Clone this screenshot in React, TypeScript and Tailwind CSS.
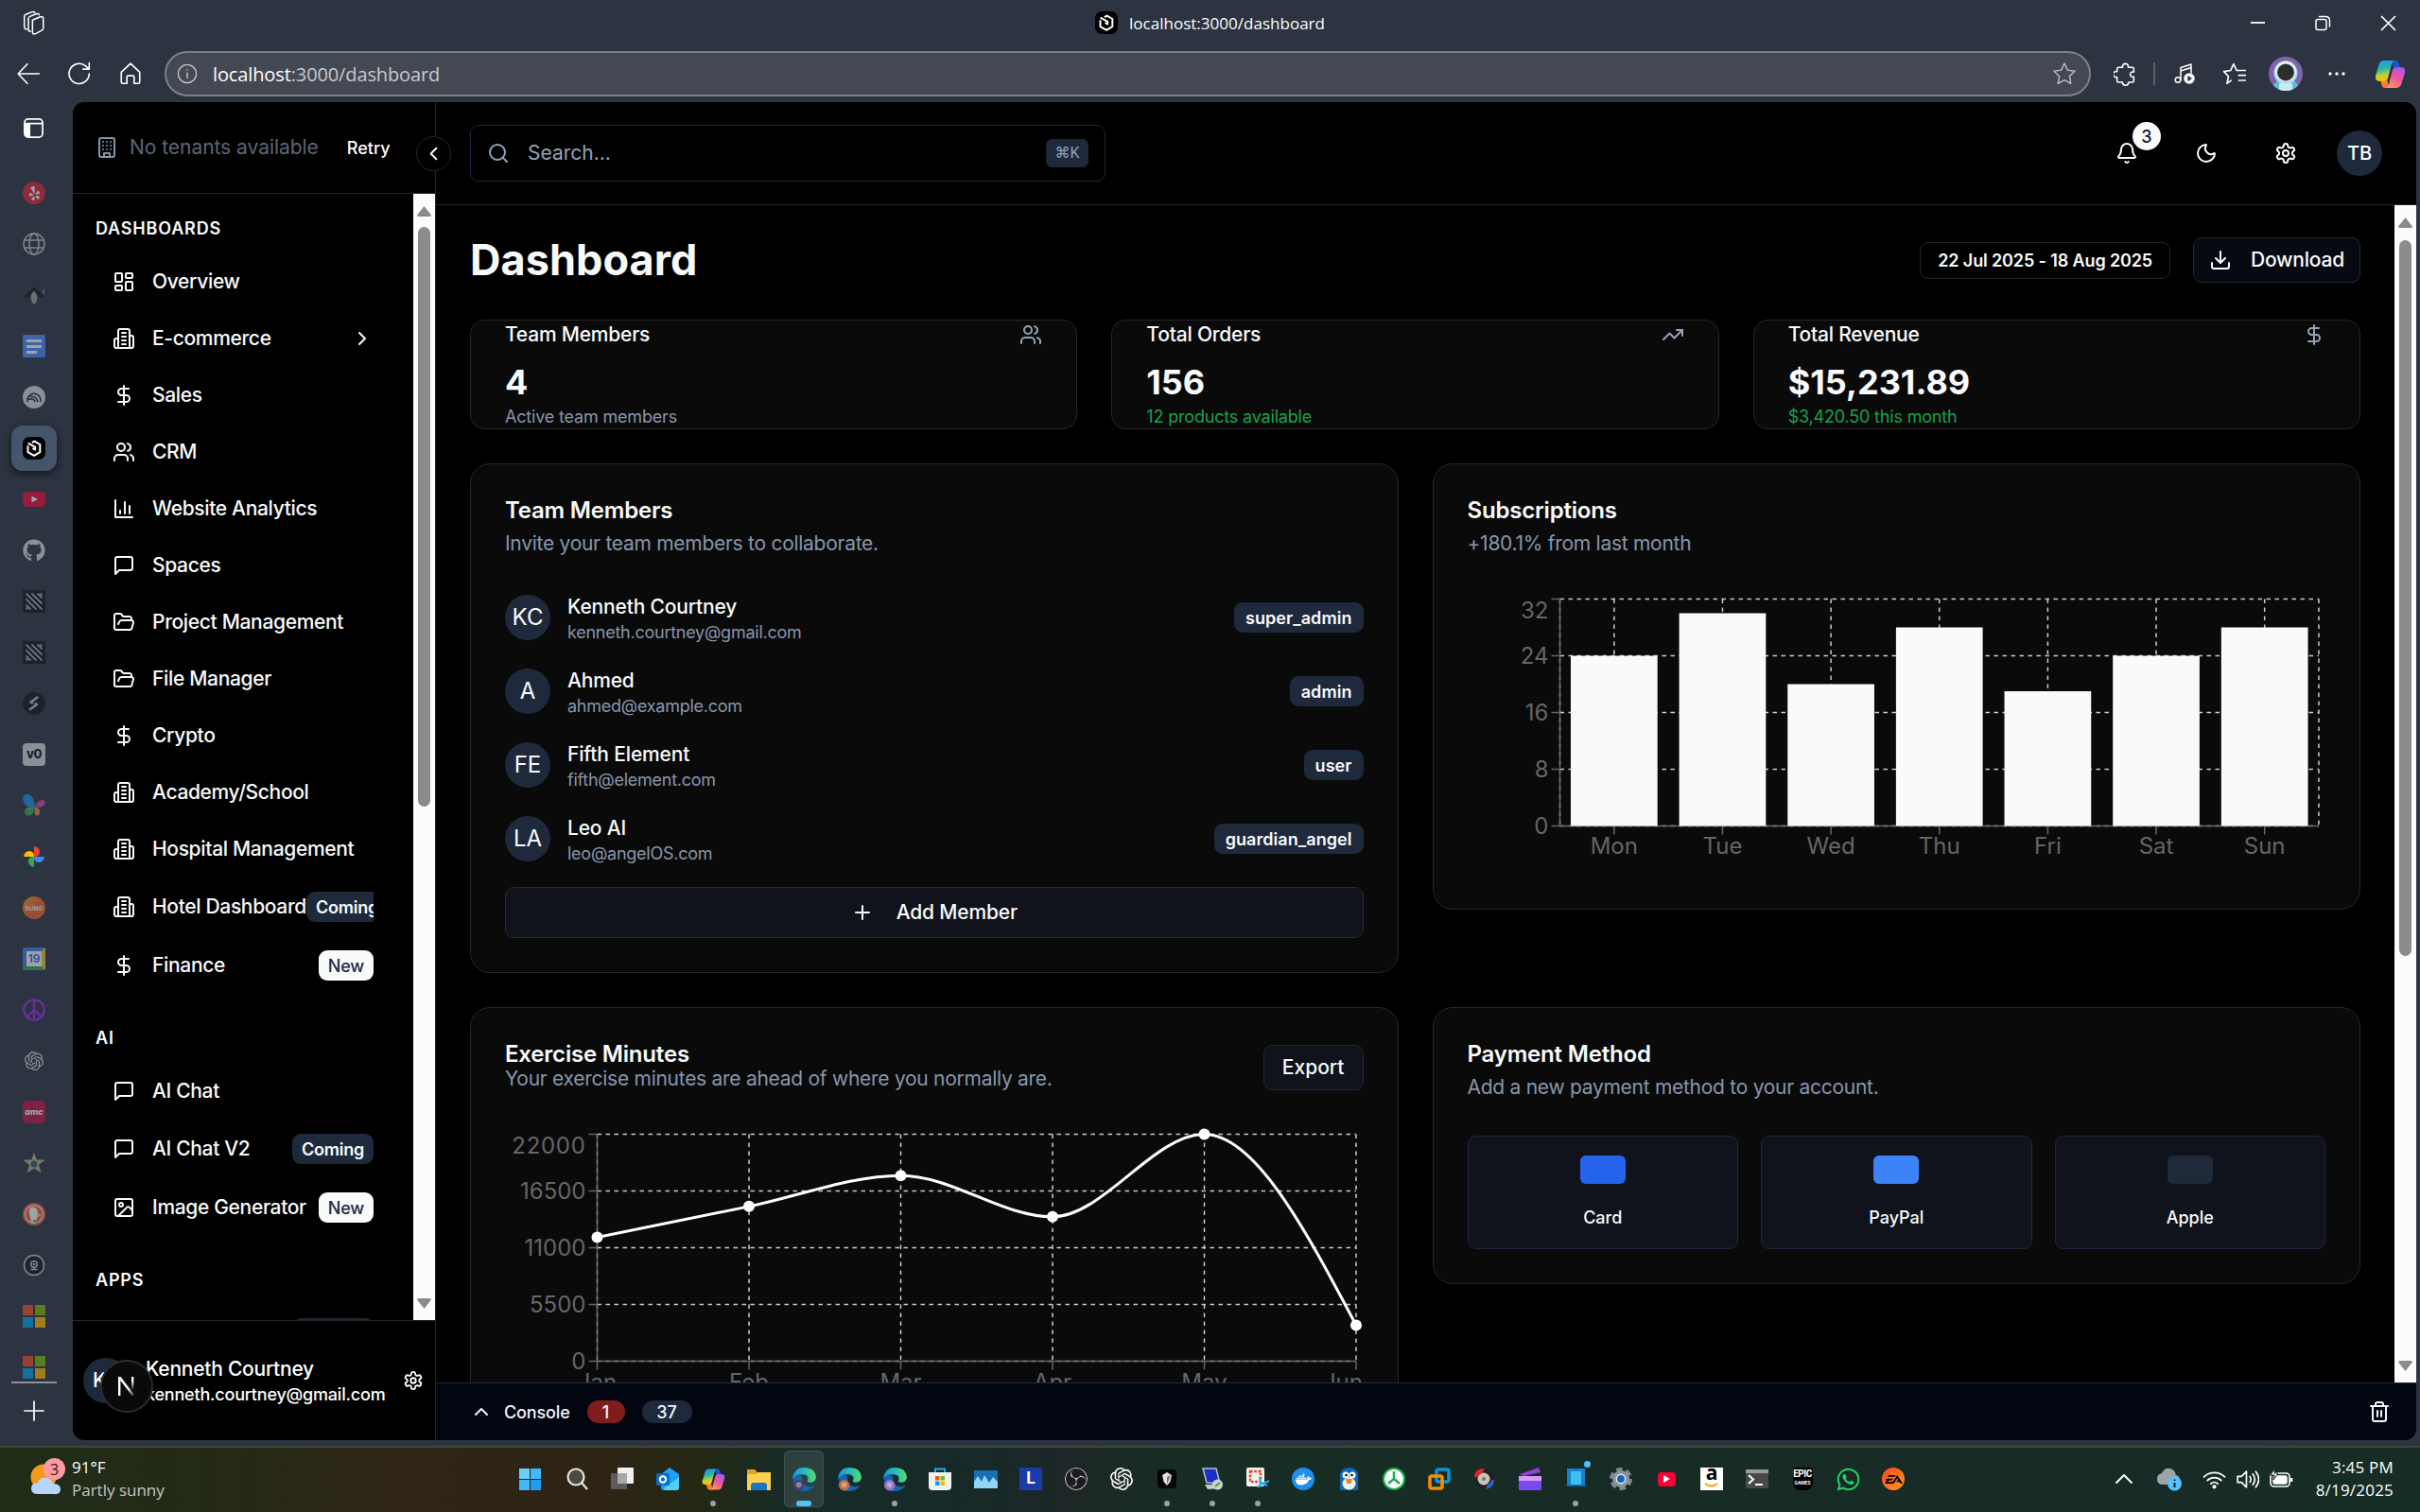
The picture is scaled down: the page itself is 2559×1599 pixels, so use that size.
import React from "react";
import {
  Bell,
  ChevronLeft,
  ChevronRight,
  ChevronUp,
  DollarSign,
  Download,
  FolderOpen,
  Image as ImageIcon,
  Moon,
  Plus,
  Search,
  Trash2,
  TrendingUp,
  Users,
} from "lucide-react";
import { FaAmazon, FaGithub, FaWhatsapp, FaYelp, FaDocker } from "react-icons/fa";
import { SiOpenai, SiObsstudio, SiEa, SiDuckduckgo } from "react-icons/si";

type IconProps = { size?: number; className?: string };

function Stroke({ size = 24, className = "", width = 2, children }: IconProps & { width?: number; children: React.ReactNode }) {
  return (
    <svg width={size} height={size} viewBox="0 0 24 24" fill="none" stroke="currentColor" strokeWidth={width} strokeLinecap="round" strokeLinejoin="round" className={`shrink-0 ${className}`}>
      {children}
    </svg>
  );
}

/* ---------- app icons ---------- */

const BuildingTwo = (p: IconProps) => (
  <Stroke {...p}>
    <path d="M6 22V4a2 2 0 0 1 2-2h8a2 2 0 0 1 2 2v18Z" />
    <path d="M6 12H4a2 2 0 0 0-2 2v6a2 2 0 0 0 2 2h2" />
    <path d="M18 9h2a2 2 0 0 1 2 2v9a2 2 0 0 1-2 2h-2" />
    <path d="M10 6h4M10 10h4M10 14h4M10 18h4" />
  </Stroke>
);
const Building = (p: IconProps) => (
  <Stroke {...p}>
    <rect width="16" height="20" x="4" y="2" rx="2" />
    <path d="M9 22v-4h6v4M8 6h.01M16 6h.01M12 6h.01M12 10h.01M12 14h.01M16 10h.01M16 14h.01M8 10h.01M8 14h.01" />
  </Stroke>
);
const Dashboard = (p: IconProps) => (
  <Stroke {...p}>
    <rect width="7" height="9" x="3" y="3" rx="1" />
    <rect width="7" height="5" x="14" y="3" rx="1" />
    <rect width="7" height="9" x="14" y="12" rx="1" />
    <rect width="7" height="5" x="3" y="16" rx="1" />
  </Stroke>
);
const Bars = (p: IconProps) => (
  <Stroke {...p}>
    <path d="M3 3v18h18M18 17V9M13 17V5M8 17v-3" />
  </Stroke>
);
const Message = (p: IconProps) => (
  <Stroke {...p}>
    <path d="M21 15a2 2 0 0 1-2 2H7l-4 4V5a2 2 0 0 1 2-2h14a2 2 0 0 1 2 2z" />
  </Stroke>
);
const Gear = (p: IconProps) => (
  <Stroke {...p}>
    <path d="M12.22 2h-.44a2 2 0 0 0-2 2v.18a2 2 0 0 1-1 1.73l-.43.25a2 2 0 0 1-2 0l-.15-.08a2 2 0 0 0-2.73.73l-.22.38a2 2 0 0 0 .73 2.73l.15.1a2 2 0 0 1 1 1.72v.51a2 2 0 0 1-1 1.74l-.15.09a2 2 0 0 0-.73 2.73l.22.38a2 2 0 0 0 2.73.73l.15-.08a2 2 0 0 1 2 0l.43.25a2 2 0 0 1 1 1.73V20a2 2 0 0 0 2 2h.44a2 2 0 0 0 2-2v-.18a2 2 0 0 1 1-1.73l.43-.25a2 2 0 0 1 2 0l.15.08a2 2 0 0 0 2.73-.73l.22-.39a2 2 0 0 0-.73-2.73l-.15-.08a2 2 0 0 1-1-1.74v-.5a2 2 0 0 1 1-1.74l.15-.09a2 2 0 0 0 .73-2.73l-.22-.38a2 2 0 0 0-2.73-.73l-.15.08a2 2 0 0 1-2 0l-.43-.25a2 2 0 0 1-1-1.73V4a2 2 0 0 0-2-2z" />
    <circle cx="12" cy="12" r="3" />
  </Stroke>
);

/* ---------- browser chrome ---------- */

function AppLogo() {
  return (
    <svg width="24" height="24" viewBox="0 0 24 24" className="shrink-0">
      <rect width="24" height="24" rx="7" fill="#000" />
      <path d="M5.500 9.200V16.200L12 19.800l6.300-3.600V8L12.500 4.600 9.800 6.200M5.600 6.600 13.200 10.900v2.700L10.500 12" fill="none" stroke="#fff" strokeWidth="2" strokeLinejoin="round" />
    </svg>
  );
}

function TitleBar() {
  return (
    <div className="flex h-[48px] items-center text-white">
      <div className="flex w-[72px] justify-center">
        <Stroke size={26} width={1.4}>
          <path d="M10.500 9.500 17.500 6.500Q21 5.300 21 8v9.500q0 1.500-1.500 2L14 22.500q-3.500 1.500-3.500-1.500z" />
          <path d="M8.500 20.500Q6.500 20.500 6.500 18.500V8q0-1.500 1.500-2.100L14 3.500q2.500-.8 3 .8" />
          <path d="M5 18.500Q2.500 18.500 2.500 16V6q0-1.500 1.500-2.100L10 1.500q2-.6 2.800.6" />
        </Stroke>
      </div>
      <div className="flex flex-1 items-center justify-center gap-[12px] pl-[108px]">
        <AppLogo />
        <span className="pt-[2px] font-['Open_Sans'] text-[17px] tracking-[0.001em]">localhost:3000/dashboard</span>
      </div>
      <div className="flex items-center gap-[52px] pr-[25px]">
        <svg width="17" height="17" viewBox="0 0 17 17" stroke="#fff" strokeWidth="1.800"><path d="M1 8h15" /></svg>
        <svg width="17" height="17" viewBox="0 0 17 17" fill="none" stroke="#fff" strokeWidth="1.500"><rect x="1" y="4.500" width="11" height="11" rx="2" /><path d="M4.500 1.500H11q4.500 0 4.500 4.500v6" strokeLinecap="round" /></svg>
        <svg width="17" height="17" viewBox="0 0 17 17" stroke="#fff" strokeWidth="1.700"><path d="M1 1l15 15M16 1 1 16" /></svg>
      </div>
    </div>
  );
}

function CopilotMark({ size }: { size: number }) {
  return (
    <svg width={size} height={size} viewBox="0 0 32 32" className="shrink-0">
      <defs>
        <linearGradient id="cpA" x1="0" y1="0" x2="0.200" y2="1">
          <stop offset="0" stopColor="#1a9be8" />
          <stop offset=".45" stopColor="#2bb3b0" />
          <stop offset=".75" stopColor="#b5d334" />
          <stop offset="1" stopColor="#ffc400" />
        </linearGradient>
        <linearGradient id="cpB" x1="0.800" y1="0" x2="0.200" y2="1">
          <stop offset="0" stopColor="#a855f7" />
          <stop offset=".5" stopColor="#f0569a" />
          <stop offset="1" stopColor="#ff9a4d" />
        </linearGradient>
      </defs>
      <path d="M17 2h5q2 0 2.800 2.500L26.500 10H20z" fill="#1b55d9" />
      <path d="M15 30h-5q-2 0-2.600-2.500L6 22h7z" fill="#ff7a33" />
      <path d="M9.500 2H20q-2 1-2.700 4L14 19q-1 4-4 4H4.500Q0 23 1 17.500L4.500 6Q5.600 2 9.500 2z" fill="url(#cpA)" />
      <path d="M22.500 30H12q2-1 2.700-4L18 13q1-4 4-4h5.500Q32 9 31 14.500L27.500 26q-1.100 4-5 4z" fill="url(#cpB)" />
    </svg>
  );
}

function Toolbar() {
  return (
    <div className="flex h-[60px] items-center text-white">
      <div className="flex w-[174px] items-center gap-[28px] pl-[17px]">
        <Stroke size={26} width={1.500}><path d="M22.500 12H2M11 2.500 2 12l9 9.500" /></Stroke>
        <Stroke size={26} width={1.500}><path d="M21.500 12A9.800 9.800 0 1 1 17.500 4L21 7M21.500 1.500V7.500H15.500" /></Stroke>
        <Stroke size={26} width={1.500}><path d="M3 10.500 12 2l9 8.500V20q0 1.500-1.500 1.500H15.500V15q0-1-1-1h-5q-1 0-1 1v6.500H4.500Q3 21.500 3 20z" /></Stroke>
      </div>
      <div className="flex h-[48px] w-[2037px] items-center rounded-full border-2 border-[#7c8189] bg-[#434852] pr-[13px] pl-[11px]">
        <Stroke size={22} width={1.500} className="text-[#c9ccd1]">
          <circle cx="12" cy="12" r="10.500" /><path d="M12 11v6M12 7.200v.4" />
        </Stroke>
        <span className="ml-[16px] pt-[1px] font-['Open_Sans'] text-[20px] tracking-[-0.006em] text-[#c7cacf]">
          <span className="text-white">localhost</span>:3000/dashboard
        </span>
        <Stroke size={26} width={1.300} className="ml-auto text-[#b9bcc2]">
          <path d="M12 1.800 15.100 8.400l7.100 1-5.200 5 1.300 7.200L12 18.100l-6.300 3.500L7 14.400l-5.200-5 7.100-1z" />
        </Stroke>
      </div>
      <div className="flex flex-1 items-center pl-[24px]">
        <Stroke size={25} width={1.500}>
          <path d="M5 5h4.200a2.900 2.900 0 1 1 5.600 0H19q1.500 0 1.500 1.500V9.800a2.600 2.600 0 1 0 0 4.800v4q0 1.500-1.500 1.500h-3.800a3 3 0 1 1-6.200 0H5q-1.500 0-1.500-1.500V14.800a2.900 2.900 0 1 1 0-5.400V6.500Q3.500 5 5 5z" />
        </Stroke>
        <div className="ml-[17px] h-[24px] w-[2px] bg-[#596069]" />
        <Stroke size={24} width={1.500} className="ml-[19px]">
          <path d="M8 18V5.500L19 2v9M8 9l11-3.500" />
          <circle cx="5" cy="18.500" r="2.800" />
          <circle cx="17" cy="17" r="5" fill="#fff" /><path d="M16 15v4l3-2z" fill="#2b3440" stroke="#2b3440" />
        </Stroke>
        <Stroke size={26} width={1.500} className="ml-[28px]">
          <path d="M8.500 18.500 4.500 21.500 6 14.500 1.500 9.800l6.500-1L11 2.500l3 6.300h8.500M16 13.500h6.500M16 18.500h6.500" />
        </Stroke>
        <svg width="36" height="36" viewBox="0 0 36 36" className="ml-[23px] shrink-0">
          <defs><clipPath id="avatarClip"><circle cx="18" cy="18" r="18" /></clipPath></defs>
          <g clipPath="url(#avatarClip)">
            <rect width="36" height="36" fill="#8163ad" />
            <path d="M4 36q0-12 14-12t14 12z" fill="#62bfd2" />
            <circle cx="18" cy="17" r="12.500" fill="#a5dfe9" />
            <circle cx="18" cy="15.500" r="11" fill="#e2f3f6" />
            <circle cx="18" cy="16.500" r="9" fill="#2f2d2b" />
            <rect x="11" y="28" width="14" height="8" rx="2" fill="#c9ebf2" />
          </g>
        </svg>
        <svg width="20" height="6" viewBox="0 0 20 6" fill="#fff" className="ml-[26px] shrink-0"><circle cx="3" cy="3" r="1.700" /><circle cx="10" cy="3" r="1.700" /><circle cx="17" cy="3" r="1.700" /></svg>
        <div className="ml-[30px]"><CopilotMark size={33} /></div>
      </div>
    </div>
  );
}

/* ---------- vertical tab strip ---------- */

const Hatch = () => (
  <svg width="24" height="24" viewBox="0 0 24 24">
    <rect width="24" height="24" fill="#12161c" />
    <path d="M4 4l16 16M4 10l10 10M4 16l4 4M10 4l10 10M16 4l4 4M4 19l1 1M19 4l1 1" stroke="#b8bec6" strokeWidth="1.700" strokeLinecap="round" />
  </svg>
);

const Squares = () => (
  <svg width="24" height="24" viewBox="0 0 24 24">
    <rect width="11" height="11" fill="#f25022" /><rect x="13" width="11" height="11" fill="#7fba00" />
    <rect y="13" width="11" height="11" fill="#00a4ef" /><rect x="13" y="13" width="11" height="11" fill="#ffb900" />
  </svg>
);

const tabIcons: React.ReactNode[] = [
  <div className="flex size-[24px] items-center justify-center rounded-full bg-[#e0243a] text-white"><FaYelp size={15} /></div>,
  <Stroke size={24} width={1.500} className="text-[#c5cad1]"><circle cx="12" cy="12" r="11" /><ellipse cx="12" cy="12" rx="5" ry="11" /><path d="M2 8h20M2 16h20" /></Stroke>,
  <svg width="24" height="24" viewBox="0 0 24 24"><path d="M1 14 12 3l11 11-4 1-7-8-7 8z" fill="#14181e" /><path d="M12 8q5 4 2.500 11L12 22l-2.500-3Q7 12 12 8z" fill="#9aa0a8" /><path d="M22 6v5" stroke="#3b82c4" strokeWidth="2" /></svg>,
  <div className="flex size-[24px] flex-col justify-center gap-[3px] rounded-[2px] bg-[#4f8bff] pl-[4px]"><div className="h-[3px] w-[16px] bg-white" /><div className="h-[3px] w-[16px] bg-white" /><div className="h-[3px] w-[11px] bg-white" /></div>,
  <svg width="24" height="24" viewBox="0 0 24 24"><circle cx="12" cy="12" r="12" fill="#d8dce1" /><path d="M5 17v-3a7 7 0 0 1 14 3M7.500 11.500Q14 10 16 17M5.500 14.500q6-2 7.500 2.500" fill="none" stroke="#222a34" strokeWidth="1.500" /></svg>,
  null,
  <svg width="24" height="24" viewBox="0 0 24 24"><rect y="4" width="24" height="16" rx="4" fill="#f0083c" /><path d="M9.500 8.500v7l6.500-3.500z" fill="#fff" /></svg>,
  <FaGithub size={24} color="#d8dce1" />,
  <Hatch />,
  <Hatch />,
  <svg width="24" height="24" viewBox="0 0 24 24"><circle cx="12" cy="12" r="12" fill="#12161c" /><path d="M8.500 10.500 15.500 5.500M8 18 15 13M8.500 10.500l1.500.7M15 13l-1.500-.7" stroke="#b8bec6" strokeWidth="2.500" strokeLinecap="round" /></svg>,
  <div className="flex size-[24px] items-center justify-center rounded-[4px] bg-[#d8dce1] font-['Inter'] text-[13px] font-extrabold tracking-[-0.030em] text-[#10151c]">v0</div>,
  <svg width="24" height="24" viewBox="0 0 24 24"><path d="M13 13Q12 0 4 0-1 1 .5 7q2 8 12.500 6z" fill="#1793e8" /><path d="M13 13q-10-1-11 5 0 5 5 4.500Q12 22 13 13z" fill="#3fa85c" /><path d="M13 14q1-8 9-8 4 2 0 6-3 3-9 2z" fill="#d8409a" /><path d="M13 14q6 0 5 6-2 5-5 1-1-3 0-7z" fill="#e08a3c" /></svg>,
  <svg width="24" height="24" viewBox="0 0 24 24"><path d="M12 1q6 1 6 6t-6 5z" fill="#ea4335" /><path d="M1 12q1-6 6-6t5 6z" fill="#fbbc04" /><path d="M12 12v11q-6-1-6-6t6-5z" fill="#34a853" /><path d="M12 12h11q-1 6-6 6t-5-6z" fill="#4285f4" /></svg>,
  <div className="flex size-[24px] items-center justify-center rounded-full bg-gradient-to-br from-[#f0a020] via-[#f2662c] to-[#e8683a] font-['Inter'] text-[6px] font-bold tracking-[0.060em] text-white">SUNO</div>,
  <div className="flex size-[24px] items-center justify-center border-4 border-t-[#3f7df0] border-r-[#f7c32e] border-b-[#34a853] border-l-[#3f7df0] bg-white font-['Inter'] text-[12px] font-semibold text-[#3268d6]">19</div>,
  <Stroke size={24} width={2.300} className="text-[#9a2be8]"><circle cx="12" cy="12" r="10.700" /><path d="M12 1.500v21M12 12l-7.500 7M12 12l7.500 7" /></Stroke>,
  <SiOpenai size={20} color="#d8dce1" />,
  <div className="flex size-[24px] items-center justify-center rounded-[4px] bg-[#c01448] font-['Inter'] text-[9px] font-extrabold text-white italic">amc</div>,
  <svg width="24" height="24" viewBox="0 0 24 24"><path d="M12 1l2.700 7.500H24l-7 5.300 2.500 8.700L12 17.500l-7.500 5L7 13.800 0 8.500h9.300z" fill="#b8af8a" /><circle cx="12" cy="13" r="3.500" fill="#2d5b66" /></svg>,
  <svg width="24" height="24" viewBox="0 0 24 24"><circle cx="12" cy="12" r="12" fill="#f0603f" /><circle cx="12" cy="12" r="10" fill="#fff" /><circle cx="12" cy="12" r="9" fill="#f0603f" /><path d="M8 5q6-2 8 4l-.5 2 4 2q-1 2-4 1.500l-1 6.500q-4 1-5.500-.5-1-6-2-9T8 5z" fill="#fff" /><path d="m14.500 12 5 1.200-4.500 1.600z" fill="#f7c52e" /><path d="M11 18h5v2.500h-5z" fill="#4caf50" /></svg>,
  <Stroke size={24} width={1.500} className="text-[#c5cad1]"><circle cx="12" cy="12" r="10.500" fill="#151a20" /><circle cx="12" cy="11" r="3.200" /><circle cx="12" cy="11" r=".6" /><path d="M9 16.500h6M12 14.500v2" /></Stroke>,
  <Squares />,
  <Squares />,
];

function TabStrip() {
  return (
    <div className="flex w-[77px] shrink-0 flex-col overflow-hidden">
      <div className="flex h-[54px] w-[71px] items-center justify-center text-white">
        <Stroke size={23} width={1.800}><rect x="2" y="2" width="20" height="20" rx="4" /><path d="M2 7h20" /><path d="M3 7.500h4.500V21H5q-2 0-2-2z" fill="#fff" /></Stroke>
      </div>
      <div className="mt-[15px] h-[1284px] w-[72px] overflow-hidden">
        {tabIcons.map((icon, i) =>
          i === 5 ? (
            <div key={i} className="flex h-[54px] items-center justify-center">
              <div className="flex size-[48px] items-center justify-center rounded-[12px] bg-[#45566b] shadow-[0_3px_8px_rgba(0,0,0,0.6)]"><AppLogo /></div>
            </div>
          ) : (
            <div key={i} className={i === 13 ? "flex h-[54px] items-center justify-center" : "flex h-[54px] items-center justify-center opacity-55"}>{icon}</div>
          ),
        )}
      </div>
      <div className="ml-[12px] h-[2px] w-[48px] bg-[#8b9199]" />
      <div className="flex h-[58px] w-[71px] items-center justify-center text-white">
        <Stroke size={24} width={1.700}><path d="M12 2v20M2 12h20" /></Stroke>
      </div>
    </div>
  );
}

/* ---------- shared pieces ---------- */

function Scrollbar({ thumb }: { thumb: string }) {
  return (
    <div className="flex h-full w-[23px] shrink-0 flex-col items-center bg-[#fcfcfc]">
      <svg width="15" height="11" viewBox="0 0 15 11" className="mt-[13px] shrink-0"><path d="M7.500 0 15 9.500Q15 11 13 11H2Q0 11 0 9.500z" fill="#8b8b8b" /></svg>
      <div className={`w-[13px] rounded-full bg-[#8b8b8b] ${thumb}`} />
      <svg width="15" height="11" viewBox="0 0 15 11" className="mt-auto mb-[12px] shrink-0"><path d="M7.500 11 15 1.500Q15 0 13 0H2Q0 0 0 1.500z" fill="#8b8b8b" /></svg>
    </div>
  );
}

/* ---------- sidebar ---------- */

type Item = { label: string; icon: (p: IconProps) => React.ReactNode; badge?: "New" | "Coming"; arrow?: boolean };

const L = (C: React.ComponentType<{ size?: number; className?: string }>) => (p: IconProps) => <C {...p} />;

const groups: { label: string; items: Item[] }[] = [
  {
    label: "DASHBOARDS",
    items: [
      { label: "Overview", icon: Dashboard },
      { label: "E-commerce", icon: BuildingTwo, arrow: true },
      { label: "Sales", icon: L(DollarSign) },
      { label: "CRM", icon: L(Users) },
      { label: "Website Analytics", icon: Bars },
      { label: "Spaces", icon: Message },
      { label: "Project Management", icon: L(FolderOpen) },
      { label: "File Manager", icon: L(FolderOpen) },
      { label: "Crypto", icon: L(DollarSign) },
      { label: "Academy/School", icon: BuildingTwo },
      { label: "Hospital Management", icon: BuildingTwo },
      { label: "Hotel Dashboard", icon: BuildingTwo, badge: "Coming" },
      { label: "Finance", icon: L(DollarSign), badge: "New" },
    ],
  },
  {
    label: "AI",
    items: [
      { label: "AI Chat", icon: Message },
      { label: "AI Chat V2", icon: Message, badge: "Coming" },
      { label: "Image Generator", icon: L(ImageIcon), badge: "New" },
    ],
  },
];

function NavItem({ item }: { item: Item }) {
  const Icon = item.icon;
  return (
    <div className={`flex items-center overflow-hidden ${item.badge ? "h-[56px]" : "h-[54px]"}`}>
      <Icon size={24} className="shrink-0" />
      <span className="ml-[18px] shrink-0 text-[21px] font-[450] tracking-[-0.016em] whitespace-nowrap">{item.label}</span>
      {item.arrow && <ChevronRight size={24} className="ml-auto" />}
      {item.badge && (
        <span className={`ml-auto flex h-[32px] shrink-0 items-center rounded-[9px] px-[10px] text-[18px] tracking-[-0.012em] ${item.badge === "New" ? "bg-[#f8fafc] font-medium text-[#1e293b]" : "bg-[#1e293b] font-semibold text-[#f8fafc]"}`}>
          {item.badge}
        </span>
      )}
    </div>
  );
}

function GroupLabel({ children }: { children: React.ReactNode }) {
  return <div className="flex h-[48px] items-center text-[18px] font-semibold tracking-[0.045em]">{children}</div>;
}

function Sidebar() {
  return (
    <div className="relative flex w-[384px] shrink-0 flex-col border-r border-[#262626]">
      <div className="flex h-[97px] items-center border-b border-[#262626] pl-[24px]">
        <Building size={24} className="text-[#8592a8]" />
        <span className="ml-[12px] text-[21px] tracking-[-0.002em] text-[#5d6577]">No tenants available</span>
        <span className="ml-[30px] text-[18px] font-medium text-white">Retry</span>
      </div>
      <div className="flex h-[1191px]">
        <div className="w-[360px] overflow-hidden pt-[12px] pr-[42px] pl-[24px] text-[#f8fafc]">
          {groups.map((g) => (
            <div key={g.label} className="mb-[24px] flex flex-col gap-[6px]">
              <GroupLabel>{g.label}</GroupLabel>
              <div className="flex flex-col gap-[6px] pl-[18px]">
                {g.items.map((it) => <NavItem key={it.label} item={it} />)}
              </div>
            </div>
          ))}
          <GroupLabel>APPS</GroupLabel>
          <div className="mt-[17px] ml-auto h-[32px] w-[85px] rounded-[9px] bg-[#1e293b]" />
        </div>
        <Scrollbar thumb="h-[613px] mt-[11px]" />
      </div>
      <div className="flex flex-1 items-center rounded-bl-[12px] border-t border-[#262626] pl-[11px] text-white">
        <div className="relative flex size-[48px] items-center rounded-full bg-[#1e293b] pl-[10px] text-[21px] font-medium">
          KC
          <div className="absolute top-[2px] left-[18px] flex size-[56px] items-center justify-center rounded-full border-2 border-[#2d2d2d] bg-[#0a0a0a]">
            <svg width="20" height="22" viewBox="0 0 20 22" fill="none">
              <defs>
                <linearGradient id="nLeg" x1="0" y1="0" x2="0" y2="1"><stop offset=".3" stopColor="#fff" /><stop offset="1" stopColor="#fff" stopOpacity="0" /></linearGradient>
                <linearGradient id="nDiag" x1="0" y1="0" x2="1" y2="1"><stop offset=".6" stopColor="#fff" /><stop offset="1" stopColor="#fff" stopOpacity=".1" /></linearGradient>
              </defs>
              <path d="M1 21V1h2.600L18 20l-2 1.500L3.400 5v16z" fill="url(#nDiag)" />
              <path d="M15 1h2.400v14H15z" fill="url(#nLeg)" />
            </svg>
          </div>
        </div>
        <div className="ml-[18px] flex flex-col pt-[1px] whitespace-nowrap">
          <span className="text-[21px] leading-[27px] font-medium tracking-[-0.012em]">Kenneth Courtney</span>
          <span className="text-[18px] leading-[27px] font-medium tracking-[-0.011em]">kenneth.courtney@gmail.com</span>
        </div>
        <Gear size={22} className="mr-[12px] ml-auto" />
      </div>
      <div className="absolute top-[36px] left-[363px] z-10 flex size-[37px] items-center justify-center rounded-full border border-[#262626] bg-black text-white">
        <ChevronLeft size={23} />
      </div>
    </div>
  );
}

/* ---------- main header ---------- */

function Header() {
  return (
    <div className="flex h-[109px] shrink-0 items-center border-b border-[#262626] px-[36px] text-white">
      <div className="flex h-[60px] w-[672px] items-center rounded-[9px] border border-[#1e293b] px-[17px]">
        <Search size={24} className="text-[#94a3b8]" />
        <span className="ml-[19px] text-[21px] text-[#94a3b8]">Search...</span>
        <span className="ml-auto flex h-[30px] w-[45px] items-center justify-center rounded-[6px] border border-[#262626] bg-[#1e293b] font-['DejaVu_Sans','Inter'] text-[16px] text-[#94a3b8]">
          ⌘<span className="font-['Roboto']">K</span>
        </span>
      </div>
      <div className="ml-auto flex items-center">
        <div className="relative">
          <Bell size={24} />
          <span className="absolute -top-[21px] left-[18px] flex size-[30px] items-center justify-center rounded-full bg-[#f8fafc] text-[18px] font-medium text-[#0f172a]">3</span>
        </div>
        <Moon size={24} className="ml-[60px]" />
        <Gear size={24} className="ml-[60px]" />
        <div className="ml-[42px] flex size-[48px] items-center justify-center rounded-full bg-[#1e293b] text-[20px] font-medium">TB</div>
      </div>
    </div>
  );
}

/* ---------- cards ---------- */

const stats = [
  { title: "Team Members", value: "4", note: "Active team members", noteClass: "text-[#8896ad]", Icon: Users },
  { title: "Total Orders", value: "156", note: "12 products available", noteClass: "text-[#16a34a]", Icon: TrendingUp },
  { title: "Total Revenue", value: "$15,231.89", note: "$3,420.50 this month", noteClass: "text-[#16a34a]", Icon: DollarSign },
];

function Card({ className = "", children }: { className?: string; children: React.ReactNode }) {
  return <div className={`rounded-[21px] border border-[#262626] bg-[#0a0a0a] p-[36px] ${className}`}>{children}</div>;
}

function CardTitle({ children }: { children: React.ReactNode }) {
  return <div className="pt-px text-[24px] leading-[24px] font-semibold tracking-[-0.008em] -mb-px">{children}</div>;
}

function CardNote({ className = "", children }: { className?: string; children: React.ReactNode }) {
  return <div className={`text-[21px] leading-[30px] tracking-[-0.013em] text-[#8896ad] ${className}`}>{children}</div>;
}

const members = [
  { initials: "KC", name: "Kenneth Courtney", email: "kenneth.courtney@gmail.com", role: "super_admin" },
  { initials: "A", name: "Ahmed", email: "ahmed@example.com", role: "admin" },
  { initials: "FE", name: "Fifth Element", email: "fifth@element.com", role: "user" },
  { initials: "LA", name: "Leo AI", email: "leo@angelOS.com", role: "guardian_angel" },
];

function TeamCard() {
  return (
    <Card className="h-[539px]">
      <CardTitle>Team Members</CardTitle>
      <CardNote className="mt-[9px]">Invite your team members to collaborate.</CardNote>
      <div className="mt-[36px] flex flex-col gap-[24px]">
        {members.map((m) => (
          <div key={m.name} className="flex h-[54px] items-center">
            <div className="flex size-[48px] items-center justify-center rounded-full bg-[#1e293b] text-[24px]">{m.initials}</div>
            <div className="ml-[18px] flex flex-col pt-px">
              <span className="text-[21px] leading-[30px] font-medium tracking-[-0.008em]">{m.name}</span>
              <span className="text-[18px] leading-[24px] tracking-[-0.014em] text-[#8896ad]">{m.email}</span>
            </div>
            <span className="ml-auto flex h-[32px] items-center rounded-[9px] bg-[#1e293b] px-[12px] text-[18px] font-semibold tracking-[0.003em]">{m.role}</span>
          </div>
        ))}
        <div className="flex h-[54px] items-center justify-center gap-[24px] rounded-[9px] border border-[#1e293b] bg-[#10131b] text-[21px] font-medium tracking-[-0.008em]">
          <Plus size={24} />
          Add Member
        </div>
      </div>
    </Card>
  );
}

const week = [["Mon", 24], ["Tue", 30], ["Wed", 20], ["Thu", 28], ["Fri", 19], ["Sat", 24], ["Sun", 28]] as const;

function SubscriptionsChart() {
  const x0 = 97.5, w = 802.5, y0 = 7.5, h = 240, step = w / 7;
  const bottom = y0 + h;
  return (
    <svg width="907" height="299" className="mt-[36px] block">
      <g stroke="#ccc" strokeWidth="1.500" strokeDasharray="4.500 4.500">
        {[0, 1, 2, 3, 4].map((i) => <path key={i} d={`M${x0} ${y0 + i * 60}h${w}`} />)}
        {week.map((d, i) => <path key={d[0]} d={`M${x0 + step * (i + 0.5)} ${y0}v${h}`} />)}
        <path d={`M${x0} ${y0}v${h}M${x0 + w} ${y0}v${h}`} />
      </g>
      <g stroke="#666" strokeWidth="1.500">
        <path d={`M${x0} ${y0}v${h}h${w}`} fill="none" />
        {[0, 1, 2, 3, 4].map((i) => <path key={i} d={`M${x0 - 9} ${y0 + i * 60}h9`} />)}
        {week.map((d, i) => <path key={d[0]} d={`M${x0 + step * (i + 0.5)} ${bottom}v9`} />)}
      </g>
      {week.map(([d, v], i) => (
        <rect key={d} x={x0 + step * (i + 0.1)} y={bottom - v * 7.5} width={step * 0.8} height={v * 7.5} fill="#f8fafc" />
      ))}
      <g fill="#666" fontSize="24">
        {[32, 24, 16, 8, 0].map((t, i) => <text key={t} x={x0 - 12} y={i === 0 ? y0 + 20 : y0 + i * 60 + 8.5} textAnchor="end">{t}</text>)}
        {week.map(([d], i) => <text key={d} x={x0 + step * (i + 0.5)} y={bottom + 29.5} textAnchor="middle">{d}</text>)}
      </g>
    </svg>
  );
}

const minutes = [["Jan", 12000], ["Feb", 15000], ["Mar", 18000], ["Apr", 14000], ["May", 22000], ["Jun", 3490]] as const;

/* Monotone cubic interpolation through evenly spaced points. */
function monotonePath(pts: [number, number][]) {
  const n = pts.length;
  const slope = pts.slice(1).map((p, i) => (p[1] - pts[i][1]) / (p[0] - pts[i][0]));
  const t: number[] = new Array(n).fill(0);
  for (let i = 1; i < n - 1; i++) {
    const a = slope[i - 1], b = slope[i];
    t[i] = (Math.sign(a) + Math.sign(b)) * Math.min(Math.abs(a), Math.abs(b), 0.25 * Math.abs(a + b));
  }
  t[0] = (3 * slope[0] - t[1]) / 2;
  t[n - 1] = (3 * slope[n - 2] - t[n - 2]) / 2;
  let d = `M${pts[0][0]} ${pts[0][1]}`;
  for (let i = 0; i < n - 1; i++) {
    const dx = (pts[i + 1][0] - pts[i][0]) / 3;
    d += `C${pts[i][0] + dx} ${pts[i][1] + dx * t[i]} ${pts[i + 1][0] - dx} ${pts[i + 1][1] - dx * t[i + 1]} ${pts[i + 1][0]} ${pts[i + 1][1]}`;
  }
  return d;
}

function ExerciseChart() {
  const x0 = 97.5, w = 802.5, y0 = 7.5, h = 240, step = w / 5;
  const bottom = y0 + h;
  const pts = minutes.map(([, v], i) => [x0 + i * step, bottom - (v / 22000) * h] as [number, number]);
  return (
    <svg width="907" height="300" className="mt-[36px] block overflow-visible">
      <g stroke="#ccc" strokeWidth="1.500" strokeDasharray="4.500 4.500">
        {[0, 1, 2, 3, 4].map((i) => <path key={i} d={`M${x0} ${y0 + i * 60}h${w}`} />)}
        {minutes.map((d, i) => <path key={d[0]} d={`M${x0 + step * i} ${y0}v${h}`} />)}
      </g>
      <g stroke="#666" strokeWidth="1.500">
        <path d={`M${x0} ${y0}v${h}h${w}`} fill="none" />
        {[0, 1, 2, 3, 4].map((i) => <path key={i} d={`M${x0 - 9} ${y0 + i * 60}h9`} />)}
        {minutes.map((d, i) => <path key={d[0]} d={`M${x0 + step * i} ${bottom}v9`} />)}
      </g>
      <path d={monotonePath(pts)} fill="none" stroke="#fff" strokeWidth="3" />
      {pts.map((p) => <circle key={p[0]} cx={p[0]} cy={p[1]} r="6" fill="#fff" />)}
      <g fill="#666" fontSize="24">
        {[22000, 16500, 11000, 5500, 0].map((t, i) => <text key={t} x={x0 - 12} y={i === 0 ? y0 + 20 : y0 + i * 60 + 8.5} textAnchor="end" letterSpacing={i === 0 ? 0.7 : 0}>{t}</text>)}
        {minutes.map(([d], i) => (
          <text key={d} x={i === 5 ? 907 : x0 + step * i} y={bottom + 30} textAnchor={i === 5 ? "end" : "middle"}>{d}</text>
        ))}
      </g>
    </svg>
  );
}

function Content() {
  return (
    <div className="h-[1245px] flex-1 overflow-hidden px-[36px] pt-[31px] text-[#f8fafc]">
      <div className="flex h-[54px] items-center">
        <div className="text-[45px] leading-[54px] font-bold tracking-[0.001em]">Dashboard</div>
        <div className="ml-auto flex h-[39px] items-center rounded-[9px] border border-[#262626] px-[18px] text-[18px] font-semibold tracking-[-0.007em]">22 Jul 2025 - 18 Aug 2025</div>
        <div className="ml-[24px] flex h-[48px] items-center gap-[20px] rounded-[9px] border border-[#1e293b] bg-[#070a12] px-[16px] text-[21px] font-medium tracking-[-0.010em]">
          <Download size={24} />
          Download
        </div>
      </div>
      <div className="mt-[36px] grid grid-cols-3 gap-[36px]">
        {stats.map((s) => (
          <div key={s.title} className="h-[116px] rounded-[15px] border border-[#262626] bg-[#0a0a0a] px-[36px]">
            <div className="flex h-[30px] items-center justify-between text-[21px] font-medium tracking-[-0.010em]">
              {s.title}
              <s.Icon size={24} className="text-[#94a3b8]" />
            </div>
            <div className="mt-[11px] text-[36px] leading-[48px] font-bold">{s.value}</div>
            <div className={`mt-[1px] text-[18px] leading-[24px] tracking-[-0.010em] ${s.noteClass}`}>{s.note}</div>
          </div>
        ))}
      </div>
      <div className="mt-[36px] grid grid-cols-2 items-start gap-[36px]">
        <TeamCard />
        <Card className="h-[472px]">
          <CardTitle>Subscriptions</CardTitle>
          <CardNote className="mt-[9px]">+180.1% from last month</CardNote>
          <SubscriptionsChart />
        </Card>
        <Card>
          <div className="flex items-center justify-between">
            <div>
              <CardTitle>Exercise Minutes</CardTitle>
              <CardNote>Your exercise minutes are ahead of where you normally are.</CardNote>
            </div>
            <div className="flex h-[48px] items-center rounded-[9px] border border-[#1e293b] bg-[#10131b] px-[19px] text-[21px] font-medium">Export</div>
          </div>
          <ExerciseChart />
        </Card>
        <Card className="h-[293px]">
          <CardTitle>Payment Method</CardTitle>
          <CardNote className="mt-[9px]">Add a new payment method to your account.</CardNote>
          <div className="mt-[36px] grid grid-cols-3 gap-[24px]">
            {[["Card", "bg-[#2563eb]"], ["PayPal", "bg-[#3b82f6]"], ["Apple", "bg-[#1f2937]"]].map(([name, color]) => (
              <div key={name} className="flex h-[120px] flex-col items-center rounded-[9px] border border-[#1e293b] bg-[#10131b] pt-[20px] text-[18px] font-medium">
                <div className={`h-[30px] w-[48px] rounded-[6px] ${color}`} />
                <span className="mt-[22px] leading-[27px]">{name}</span>
              </div>
            ))}
          </div>
        </Card>
      </div>
    </div>
  );
}

function Console() {
  return (
    <div className="flex h-[61px] items-center rounded-br-[12px] border-t border-[#1e293b] bg-[#020611] pl-[36px] text-[18px] font-medium text-[#f1f5f9]">
      <ChevronUp size={24} />
      <span className="ml-[12px] tracking-[-0.008em]">Console</span>
      <span className="ml-[18px] flex h-[24px] w-[40px] items-center justify-center rounded-full bg-[#7f1d1d]">1</span>
      <span className="ml-[18px] flex h-[24px] w-[53px] items-center justify-center rounded-full bg-[#1e293b]">37</span>
      <Trash2 size={24} className="mr-[27px] ml-auto" />
    </div>
  );
}

/* ---------- taskbar ---------- */

function EdgeMark({ face }: { face: string }) {
  return (
    <svg width="25" height="25" viewBox="0 0 24 24">
      <defs>
        <linearGradient id={`edge${face.slice(1)}`} x1="0" y1="0.300" x2="1" y2="0.200"><stop offset="0" stopColor="#1f8fdc" /><stop offset=".5" stopColor="#22bcc4" /><stop offset="1" stopColor="#5fe05a" /></linearGradient>
      </defs>
      <path d="M1 14Q0 24 11 24q8 0 12-6-4 2-8 1-6-2-5-7 0-5-5-4Q1 9 1 14z" fill="#1266b8" />
      <path d="M0 12Q1 0 12 0t12 10q-1 5-6 5-3 0-3-1 3-6-4-7Q4 6 0 12z" fill={`url(#edge${face.slice(1)})`} />
      <circle cx="6.500" cy="18" r="5.500" fill={face} />
      <circle cx="6.500" cy="17.500" r="2.800" fill="#fff" fillOpacity=".35" />
    </svg>
  );
}

const taskIcons: { icon: React.ReactNode; dot?: boolean; active?: boolean; notice?: boolean }[] = [
  { icon: <svg width="23" height="23" viewBox="0 0 23 23" fill="#42b8fb" className="mr-[3px]"><rect width="11" height="11" fill="#6ad0fb" /><rect x="12" width="11" height="11" /><rect y="12" width="11" height="11" /><rect x="12" y="12" width="11" height="11" fill="#1f9df5" /></svg> },
  { icon: <svg width="24" height="24" viewBox="0 0 24 24" fill="#4a4a44" stroke="#e6e6e6" strokeWidth="2.200"><circle cx="11" cy="10" r="8.500" /><path d="m17 16 6 7" /></svg> },
  { icon: <svg width="24" height="24" viewBox="0 0 24 24"><rect y="6" width="17" height="17" rx="1" fill="#5c5c5c" /><rect x="7" width="17" height="17" rx="1" fill="#f0f0f0" /><rect x="7" y="6" width="10" height="11" fill="#a8a8a8" /></svg> },
  { icon: <svg width="25" height="24" viewBox="0 0 25 24"><path d="M5 7 14 0l10 7v14q0 3-3 3H8q-3 0-3-3z" fill="#1f9ff0" /><path d="m8 22 16-12v11q0 3-3 3H9z" fill="#4fd0f7" /><rect y="6" width="14" height="13" rx="2" fill="#0a6fc9" /><circle cx="7" cy="12.500" r="3.200" fill="none" stroke="#fff" strokeWidth="2" /></svg> },
  { icon: <CopilotMark size={25} />, dot: true },
  { icon: <svg width="25" height="24" viewBox="0 0 25 24"><path d="M0 2h8l3 3h14v19H0z" fill="#e2a81c" /><path d="M0 7h10l2-2h13v19H0z" fill="#ffd04e" /><path d="M4 24v-5q0-3 3-3h11q3 0 3 3v5z" fill="#1676c8" /></svg> },
  { icon: <EdgeMark face="#4d3f66" />, active: true },
  { icon: <EdgeMark face="#c0703a" /> },
  { icon: <EdgeMark face="#9a74c0" />, dot: true },
  { icon: <svg width="24" height="24" viewBox="0 0 24 24"><path d="M7 6V1.500h10V6" fill="none" stroke="#26a8e8" strokeWidth="2" /><path d="M0 5h24v15q0 4-4 4H4q-4 0-4-4z" fill="#f1f1f1" /><rect x="7" y="9" width="4.500" height="4.500" fill="#f25022" /><rect x="12.500" y="9" width="4.500" height="4.500" fill="#7fba00" /><rect x="7" y="14.500" width="4.500" height="4.500" fill="#00a4ef" /><rect x="12.500" y="14.500" width="4.500" height="4.500" fill="#ffb900" /></svg> },
  { icon: <svg width="25" height="19" viewBox="0 0 25 19"><rect width="25" height="19" fill="#1770b4" /><path d="M0 12 4 6l4 6 3-7 5 8 4-6 5 5v7H0z" fill="#8fd6f8" /></svg> },
  { icon: <div className="flex size-[24px] items-center justify-center bg-[#1b3bab] font-['Inter'] text-[17px] font-bold text-white">L</div> },
  { icon: <SiObsstudio size={24} color="#c9c9c9" className="rounded-full bg-[#1c1a1f]" /> },
  { icon: <SiOpenai size={24} color="#fff" /> },
  { icon: <svg width="20" height="20" viewBox="0 0 20 20"><rect width="20" height="20" rx="4" fill="#050505" /><path d="m10 3 5 3-1.500 7-3.500 4-3.500-4L5 6z" fill="#e2e2e2" /><path d="m10 8 4-2-4 10z" fill="#777" /></svg>, dot: true },
  { icon: <svg width="24" height="24" viewBox="0 0 24 24"><path d="M2 1h14l4 16-14-1z" fill="#1a2fc8" stroke="#b9c0cc" strokeWidth="1.500" /><path d="M4 18h12l3 4-12 1z" fill="#c8ccd2" /><circle cx="17.500" cy="18" r="5.500" fill="#cfd3d0" /><path d="m15 20 5-4" stroke="#3a9b4a" strokeWidth="2" /></svg>, dot: true },
  { icon: <svg width="25" height="24" viewBox="0 0 25 24"><rect width="19" height="20" rx="2" fill="#f2f2f2" /><rect x="4" y="4" width="11" height="11" fill="none" stroke="#e04a22" strokeWidth="2.500" strokeDasharray="2.700 1.500" /><path d="m14 10 1 8 9-4M15 18l-3 3M15 16l7 3" stroke="#2aa8ea" strokeWidth="2" fill="none" /></svg>, dot: true },
  { icon: <div className="flex size-[24px] items-center justify-center rounded-full bg-[#1d90ee] text-white"><FaDocker size={17} /></div> },
  { icon: <svg width="19" height="24" viewBox="0 0 19 24"><path d="M0 24V8Q1 0 9.500 0T19 8v16z" fill="#0d69b8" /><ellipse cx="9.500" cy="17" rx="7" ry="6.500" fill="#f3f3ee" /><circle cx="6" cy="8" r="3.500" fill="#fff" /><circle cx="13" cy="8" r="3.500" fill="#fff" /><circle cx="6.500" cy="8" r="1.300" /><circle cx="12.500" cy="8" r="1.300" /><path d="M6 12h7l-1 5H7z" fill="#f08a1c" /></svg> },
  { icon: <svg width="24" height="24" viewBox="0 0 24 24"><circle cx="12" cy="12" r="11" fill="#fff" stroke="#1bb04a" strokeWidth="2" /><path d="M12 4v8l-6 5M12 12l6 5" stroke="#1bb04a" strokeWidth="2.500" fill="none" /></svg> },
  { icon: <svg width="24" height="24" viewBox="0 0 24 24" fill="none" strokeWidth="3.600"><rect x="9" y="2" width="13" height="13" rx="2" stroke="#0e93cf" /><rect x="2" y="9" width="13" height="13" rx="2" stroke="#f48c06" /></svg> },
  { icon: <svg width="24" height="24" viewBox="0 0 24 24"><ellipse cx="12" cy="12" rx="10" ry="11" fill="#241f1e" /><circle cx="11" cy="12" r="6.500" fill="#c9c4bb" /><circle cx="11" cy="12" r="2" fill="#777" /><path d="M1 10Q1 1 12 1L9 6Q5 6 5 10z" fill="#e0262a" /><path d="M22 13q0 8-9 10l2-5q4-1 4-5z" fill="#2c63d6" /></svg> },
  { icon: <svg width="24" height="24" viewBox="0 0 24 24"><path d="M1 7 21 0l2 5-18 4z" fill="#8a45d8" /><rect y="9" width="24" height="15" rx="1" fill="#7a4af0" /><path d="M0 9h24v5H0z" fill="#d79cf5" /></svg> },
  { icon: <svg width="23" height="22" viewBox="0 0 23 22"><rect x="2" width="19" height="17" fill="#1382d0" /><rect x="6" y="3" width="11" height="16" fill="#3fc0f5" /><path d="M0 17h23l-3 2H3z" fill="#0f67ad" /></svg>, dot: true, notice: true },
  { icon: <svg width="24" height="24" viewBox="0 0 24 24"><circle cx="12" cy="12" r="9.500" fill="none" stroke="#7f8790" strokeWidth="5" strokeDasharray="6.200 3.750" /><circle cx="12" cy="12" r="9" fill="#8b939c" /><circle cx="12" cy="12" r="4.700" fill="#1664b8" stroke="#e5e9ee" strokeWidth="1.500" /></svg> },
  { icon: <div className="flex h-[15px] w-[19px] items-center justify-center rounded-[4px] bg-[#ff0033]"><svg width="7" height="8" viewBox="0 0 7 8"><path d="M0 0v8l7-4z" fill="#fff" /></svg></div> },
  {
    icon: (
      <div className="flex size-[24px] flex-col items-center bg-white font-['Open_Sans'] text-black">
        <span className="-mt-[5px] h-[21px] text-[21px] leading-[21px] font-bold">a</span>
        <svg width="16" height="5" viewBox="0 0 16 5" fill="none" stroke="#ff9900" strokeWidth="1.800"><path d="M1 1q7 5 13 0" /></svg>
      </div>
    ),
  },
  { icon: <svg width="24" height="20" viewBox="0 0 24 20"><rect width="24" height="20" rx="1.500" fill="#4a4a4a" /><path d="M0 0h24v4H0z" fill="#9b9b9b" /><path d="m3 6 5 4.500L3 15M10 16h8" stroke="#fff" strokeWidth="2" fill="none" /></svg> },
  { icon: <div className="flex h-[24px] w-[21px] flex-col items-center rounded-b-[8px] bg-black pt-[2px] font-['Roboto'] leading-none text-white"><span className="text-[10px] font-bold tracking-[-0.050em]">EPIC</span><span className="mt-[2px] text-[5px] font-bold">GAMES</span></div> },
  { icon: <FaWhatsapp size={27} color="#25d366" /> },
  { icon: <div className="flex size-[24px] items-center justify-center rounded-full bg-gradient-to-br from-[#ff3b1f] to-[#ff9a1f] text-black"><SiEa size={19} /></div> },
];

function Taskbar() {
  return (
    <div className="flex h-[70px] items-center border-t-2 border-[#3f463f] bg-[linear-gradient(90deg,#1f2d19_0px,#232a17_200px,#2f2517_420px,#2d2414_640px,#232814_740px,#172b28_840px,#162a28_980px,#1c2726_1130px,#172d23_1260px,#182b27_2000px,#162d25_2559px)] pb-[2px] font-['Open_Sans'] text-white">
      <div className="flex w-[538px] items-center pl-[31px]">
        <div className="relative h-[38px] w-[40px]">
          <svg width="36" height="36" viewBox="0 0 36 36" className="mt-[2px]">
            <circle cx="15" cy="15" r="13.500" fill="#f59a1c" />
            <path d="M9 33q-7 0-7-6t7-6q3-7 10-5 5 1 6 6 8 0 8 6t-7 5z" fill="#b9d4fb" />
          </svg>
          <span className="absolute -top-[3px] left-[15px] flex size-[23px] items-center justify-center rounded-full bg-[#ff9aa2] text-[16px] leading-none text-[#2a1a1c]">3</span>
        </div>
        <div className="ml-[5px] flex flex-col pb-px text-[17px] leading-[24px]">
          <span>91°F</span>
          <span className="text-[#c4c8c2]">Partly sunny</span>
        </div>
      </div>
      <div className="flex">
        {taskIcons.map((t, i) => (
          <div key={i} className="relative flex h-[66px] w-[48px] items-center justify-center">
            {t.active && <div className="absolute top-[3px] left-[3px] h-[60px] w-[42px] rounded-[6px] border border-white/10 bg-white/10" />}
            <div className="relative flex h-[26px] items-center">{t.icon}</div>
            {t.dot && <div className="absolute bottom-[4px] left-[21px] size-[6px] rounded-full bg-[#9aa39f]" />}
            {t.active && <div className="absolute bottom-[4px] left-[16px] h-[6px] w-[16px] rounded-full bg-[#4cc2ff]" />}
            {t.notice && <div className="absolute top-[14px] right-[8px] size-[7px] rounded-full bg-[#4cc2ff]" />}
          </div>
        ))}
      </div>
      <div className="ml-auto flex items-center pr-[28px]">
        <Stroke size={24} width={1.900}><path d="m4 16 8-8 8 8" /></Stroke>
        <svg width="26" height="26" viewBox="0 0 26 26" className="ml-[23px]"><path d="M6 19q-6 0-6-6 0-5 5-6Q8 1 13 2q6 1 7 7 4 1 4 5t-5 5z" fill="#9da5a8" /><circle cx="18.500" cy="18" r="7.500" fill="#5ac0f8" /><path d="M18.500 17v5M18.500 13.500v1.500" stroke="#10202a" strokeWidth="2" /></svg>
        <Stroke size={25} width={1.700} className="ml-[22px]"><path d="M1.500 9.500a15 15 0 0 1 21 0M5 13a10 10 0 0 1 14 0M8.500 16.500a5 5 0 0 1 7 0" /><circle cx="12" cy="19.500" r="1.200" fill="#fff" /></Stroke>
        <Stroke size={25} width={1.600} className="ml-[10px]"><path d="M2 9h4l5-5v16l-5-5H2zM14.500 9q2 3 0 6M17.500 6.500q4 5.500 0 11M20.500 4q6 8 0 16" /></Stroke>
        <svg width="26" height="22" viewBox="0 0 26 22" fill="none" stroke="#fff" strokeWidth="1.600" className="ml-[10px]"><rect x="2" y="5" width="20" height="14" rx="3.500" /><rect x="5" y="8" width="14" height="8" rx="1.500" fill="#fff" /><path d="M24 10v4" strokeWidth="2.500" /><path d="M6 0 2 7h4l-1 5 5-7H6z" fill="#fff" stroke="#182b27" strokeWidth="1" /></svg>
        <div className="ml-[24px] flex flex-col items-end pb-px text-[17px] leading-[24px] tracking-[0.012em]">
          <span>3:45 PM</span>
          <span>8/19/2025</span>
        </div>
      </div>
    </div>
  );
}

export default function App() {
  return (
    <div className="flex h-[1599px] w-[2559px] flex-col overflow-hidden bg-[#2b3440] font-['Inter',sans-serif]">
      <TitleBar />
      <Toolbar />
      <div className="flex h-[1421px] shrink-0">
        <TabStrip />
        <div className="flex h-[1415px] w-[2478px] overflow-hidden rounded-[12px] bg-black">
          <Sidebar />
          <div className="flex flex-1 flex-col">
            <Header />
            <div className="flex h-[1245px]">
              <Content />
              <Scrollbar thumb="h-[757px] mt-[13px]" />
            </div>
            <Console />
          </div>
        </div>
      </div>
      <Taskbar />
    </div>
  );
}
